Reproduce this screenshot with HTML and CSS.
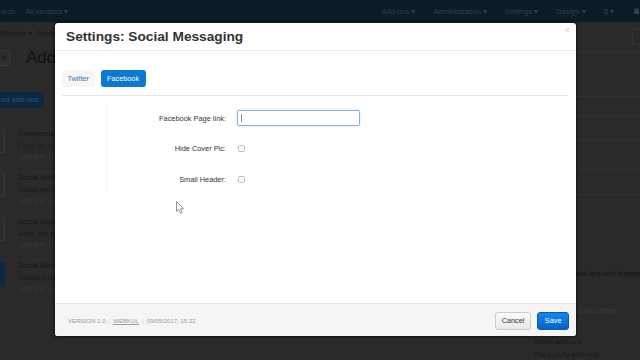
FILE: index.html
```html
<!DOCTYPE html>
<html>
<head>
<meta charset="utf-8">
<link rel="stylesheet" href="styles.css">
</head>
<body>
<div class="page">
  <header class="topbar">
    <div class="tb-left"><span class="store">tech</span><span>All vendors ▾</span></div>
    <div class="tb-right">
      <span>Add-ons ▾</span><span>Administration ▾</span><span>Settings ▾</span><span>Design ▾</span><span>$ ▾</span><span class="user"></span>
    </div>
  </header>
  <div class="main">
    <div class="content">
      <nav class="subnav"><span>Profiles ▾</span><span>Products</span></nav>
      <div class="titlebar"><span class="tool">▾</span><h1>Add-ons</h1></div>
      <div class="actions"><span class="btn-dim">ed add-ons</span></div>
      <ul class="addons">
        <li><span class="icon"></span><div class="text"><div class="t">Comments and reviews</div><div class="d">Fuzz lier text here</div><div class="m">upgrade 1.1</div></div></li>
        <li><span class="icon"></span><div class="text"><div class="t">Social buttons</div><div class="d">Social media buttons</div><div class="m">upgrade 1.1</div></div></li>
        <li><span class="icon"></span><div class="text"><div class="t">Social login</div><div class="d">Adds the social login</div><div class="m">upgrade 1.1</div></div></li>
        <li><span class="icon blue"></span><div class="text"><div class="t">Social Messaging</div><div class="d">Allows customers</div><div class="m">upgrade 1.0</div></div></li>
      </ul>
    </div>
    <aside class="sidebar">
      <div class="sb-row h30"><span class="sb-btn"></span></div>
      <div class="sb-row h45"></div>
      <div class="sb-row h20"></div>
      <div class="sb-row h23"></div>
      <div class="sb-row h30"></div>
      <div class="sb-row h25"></div>
      <p class="sb-text dark">Upload and manage add-ons and themes in</p>
      <p class="sb-text light">Check marketplace/store</p>
      <p class="sb-text">All add-ons</p>
      <p class="sb-text">Active add-ons</p>
      <p class="sb-text">Third-party add-ons</p>
    </aside>
  </div>
</div>

<div class="modal">
  <div class="modal-header">
    <h2>Settings: Social Messaging</h2>
    <span class="close">×</span>
  </div>
  <div class="modal-body">
    <div class="tabs">
      <span class="tab">Twitter</span>
      <span class="tab active">Facebook</span>
    </div>
    <div class="form">
      <div class="row"><label>Facebook Page link:</label><span class="input"><span class="caret"></span></span></div>
      <div class="row"><label>Hide Cover Pic:</label><span class="check"></span></div>
      <div class="row"><label>Small Header:</label><span class="check"></span></div>
    </div>
  </div>
  <div class="modal-footer">
    <div class="meta">Version 1.0<span class="sep">|</span><u>Webkul</u><span class="sep">|</span>09/05/2017, 15:22</div>
    <div class="buttons"><span class="btn cancel">Cancel</span><span class="btn save">Save</span></div>
  </div>
</div>

<svg class="cursor" width="10" height="14" viewBox="0 0 10 14"><path d="M0.5 0.5 L0.5 10.5 L2.8 8.3 L4.6 12.3 L6.2 11.6 L4.5 7.8 L7.6 7.8 Z" fill="#fff" stroke="#777" stroke-width="0.8"/></svg>
</body>
</html>
```

FILE: styles.css
```css
html, body {
  margin: 0;
  padding: 0;
}
body {
  width: 640px;
  height: 360px;
  overflow: hidden;
  position: relative;
  background: #2a2a2a;
  font-family: "Liberation Sans", Arial, sans-serif;
}
.page {
  display: flex;
  flex-direction: column;
  height: 360px;
}
.topbar {
  height: 22px;
  flex: none;
  background: #0b1c27;
  display: flex;
  justify-content: space-between;
  align-items: center;
  font-size: 7.5px;
  color: #2a4352;
}
.tb-left {
  display: flex;
  gap: 10px;
  margin-left: 1px;
}
.tb-right {
  display: flex;
  align-items: center;
  gap: 18px;
  padding-right: 1px;
}
.tb-right .user {
  width: 5px;
  height: 6px;
  border-radius: 3px 3px 1px 1px;
  background: #2a4352;
  margin-left: 2px;
}
.main {
  flex: 1;
  display: flex;
}
.content {
  flex: 1;
}
.subnav {
  height: 22px;
  display: flex;
  align-items: center;
  gap: 5px;
  margin-left: 1px;
  font-size: 7.5px;
  color: #171717;
}
.titlebar {
  height: 28px;
  display: flex;
  align-items: center;
  gap: 16px;
}
.tool {
  width: 10px;
  height: 16px;
  box-sizing: border-box;
  border: 1px solid #3a3a3a;
  border-left: none;
  border-radius: 0 2px 2px 0;
  background: #2d2d2d;
  color: #161616;
  font-size: 7px;
  line-height: 14px;
  text-align: right;
  padding-right: 3px;
}
.titlebar h1 {
  margin: 0;
  font-size: 17px;
  font-weight: normal;
  color: #111;
}
.actions {
  margin-top: 16px;
  height: 16px;
}
.btn-dim {
  display: inline-block;
  height: 16px;
  line-height: 16px;
  padding: 0 5px 0 1px;
  background: #0e2740;
  color: #36536d;
  border-radius: 0 2px 2px 0;
  font-size: 7.5px;
}
.addons {
  list-style: none;
  margin: 24px 0 0;
  padding: 0;
}
.addons li {
  display: flex;
  gap: 13px;
  height: 44px;
  box-sizing: border-box;
  border-bottom: 1px solid #2e2e2e;
}
.addons .icon {
  width: 5px;
  height: 24px;
  margin-top: 1px;
  box-sizing: border-box;
  border: 1px solid #383838;
  border-left: none;
  background: #2c2c2c;
  flex: none;
}
.addons .icon.blue {
  background: #0e2740;
  border-color: #0e2740;
}
.addons .text {
  font-size: 7.5px;
  line-height: 11.5px;
  white-space: nowrap;
}
.addons .t { color: #151515; }
.addons .d { color: #1c1c1c; }
.addons .m { color: #383838; }
.sidebar {
  width: 112px;
  flex: none;
}
.sb-row {
  border-bottom: 1px solid #313131;
  box-sizing: border-box;
  display: flex;
  justify-content: flex-end;
}
.h30 { height: 30px; }
.h45 { height: 45px; }
.h20 { height: 20px; }
.h23 { height: 23px; }
.h25 { height: 25px; }
.sb-btn {
  width: 8px;
  height: 17px;
  margin-top: 6px;
  box-sizing: border-box;
  border: 1px solid #353535;
  border-right: none;
  border-radius: 2px 0 0 2px;
}
.sb-text {
  margin: 0;
  padding-left: 5px;
  font-size: 7.5px;
  line-height: 13px;
  color: #191919;
  white-space: nowrap;
}
.sb-text.dark {
  margin: 72px 0 24px -29px;
  color: #141414;
}
.sb-text.light {
  color: #3a3a3a;
  margin-bottom: 5px;
}

/* Modal */
.modal {
  position: absolute;
  left: 55px;
  top: 23px;
  width: 521px;
  height: 313px;
  background: #fff;
  border-radius: 3px;
  box-shadow: 0 0 3px 1px rgba(0, 0, 0, 0.6);
  display: flex;
  flex-direction: column;
  overflow: hidden;
}
.modal-header {
  height: 28px;
  flex: none;
  box-sizing: border-box;
  border-bottom: 1px solid #ebebeb;
  display: flex;
  align-items: center;
  justify-content: space-between;
  padding: 0 6px 0 11px;
}
.modal-header h2 {
  margin: 0;
  font-size: 13.7px;
  font-weight: bold;
  color: #333;
}
.close {
  align-self: flex-start;
  margin-top: 3px;
  font-size: 10px;
  line-height: 10px;
  color: #d2d2d2;
}
.modal-body {
  flex: 1;
  padding: 19px 8px 0 7px;
}
.tabs {
  display: flex;
  gap: 6px;
  padding-bottom: 8px;
  border-bottom: 1px solid #e6e6e6;
}
.tab {
  height: 17px;
  line-height: 17px;
  padding: 0 5.5px;
  font-size: 7.3px;
  border-radius: 3px;
  color: #2a79b8;
  background: #f6f6f6;
}
.tab.active {
  background: #0c79d1;
  color: #fff;
  padding: 0 6.5px;
}
.form {
  margin: 7px 0 0 44px;
  border-left: 1px solid #f7f7f7;
}
.row {
  height: 30.5px;
  display: flex;
  align-items: center;
}
.row label {
  width: 119px;
  margin-right: 11px;
  text-align: right;
  font-size: 7.4px;
  color: #333;
}
.input {
  width: 123px;
  height: 16px;
  box-sizing: border-box;
  border: 1px solid #86b3df;
  border-radius: 2px;
  box-shadow: 0 0 2px rgba(82, 168, 236, 0.45);
  display: flex;
  align-items: center;
  padding-left: 3px;
}
.caret {
  width: 1px;
  height: 8px;
  background: #8a8a8a;
}
.check {
  width: 7px;
  height: 7px;
  box-sizing: border-box;
  border: 1px solid #bdbdbd;
  border-radius: 1.5px;
  background: #fafafa;
  margin-left: 1px;
}
.modal-footer {
  height: 33px;
  flex: none;
  box-sizing: border-box;
  border-top: 1px solid #e6e6e6;
  background: #f5f5f5;
  display: flex;
  align-items: center;
  justify-content: space-between;
  padding: 1px 7px 0 13px;
}
.meta {
  font-size: 6.1px;
  color: #9c9c9c;
  text-transform: uppercase;
}
.meta .sep {
  color: #d0d0d0;
  margin: 0 3px;
}
.buttons {
  display: flex;
  gap: 6px;
}
.btn {
  height: 18px;
  box-sizing: border-box;
  line-height: 16px;
  padding: 0 6px;
  font-size: 7.3px;
  border-radius: 3px;
}
.btn.cancel {
  background: linear-gradient(#fbfbfb, #e8e8e8);
  border: 1px solid #cdcdcd;
  color: #333;
}
.btn.save {
  background: linear-gradient(#1787e8, #0462c9);
  border: 1px solid #0659b5;
  color: #fff;
  padding: 0 6.5px;
}
.cursor {
  position: absolute;
  left: 176px;
  top: 201px;
}
```
